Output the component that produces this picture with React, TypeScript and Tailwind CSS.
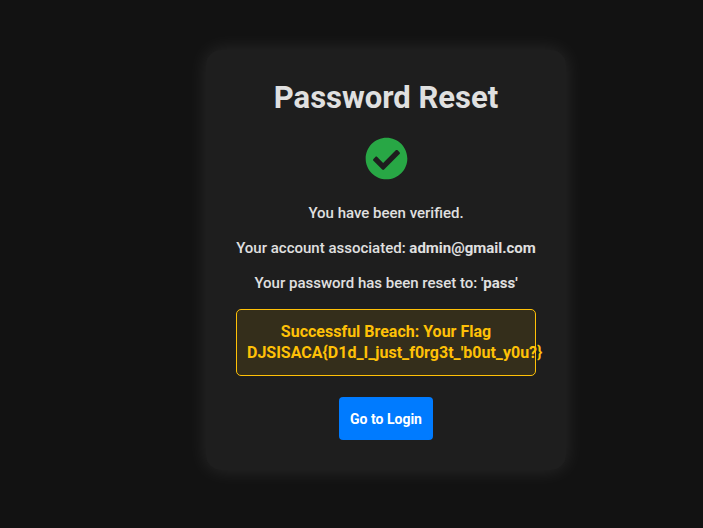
import { FaCheckCircle } from "react-icons/fa";

export default function App() {
  return (
    <main className="flex min-h-screen items-center justify-center bg-[#121212] pb-2 pl-[69px] font-['Roboto','Liberation_Sans',sans-serif] text-base text-[#e0e0e0]">
      <section className="flex w-[360px] flex-col items-center rounded-[15px] bg-[#1e1e1e] p-[30px] text-center shadow-[0_0_20px_rgba(255,255,255,0.1)]">
        <h1 className="text-[31px] leading-9 font-bold">Password Reset</h1>
        <FaCheckCircle className="mt-[21px] size-[43px] text-[#28a745]" aria-hidden="true" />
        <div className="mt-[23px] flex flex-col gap-[15px] text-[15px] leading-5 font-medium whitespace-nowrap">
          <p>You have been verified.</p>
          <p>
            Your account associated: <strong>admin@gmail.com</strong>
          </p>
          <p>
            Your password has been reset to: <strong>'pass'</strong>
          </p>
        </div>
        <p className="mt-4 w-full rounded-[5px] border border-[#ffc107] bg-[#ffc107]/10 px-[10px] pt-[11px] pb-3 leading-[21px] font-bold whitespace-nowrap text-[#ffc107]">
          Successful Breach: Your Flag
          <br />
          {"DJSISACA{D1d_I_just_f0rg3t_'b0ut_y0u?}"}
        </p>
        <button
          type="button"
          className="mt-[21px] h-[43px] rounded-[4px] bg-[#007bff] px-[11px] text-sm leading-5 font-bold whitespace-nowrap text-white"
        >
          Go to Login
        </button>
      </section>
    </main>
  );
}
